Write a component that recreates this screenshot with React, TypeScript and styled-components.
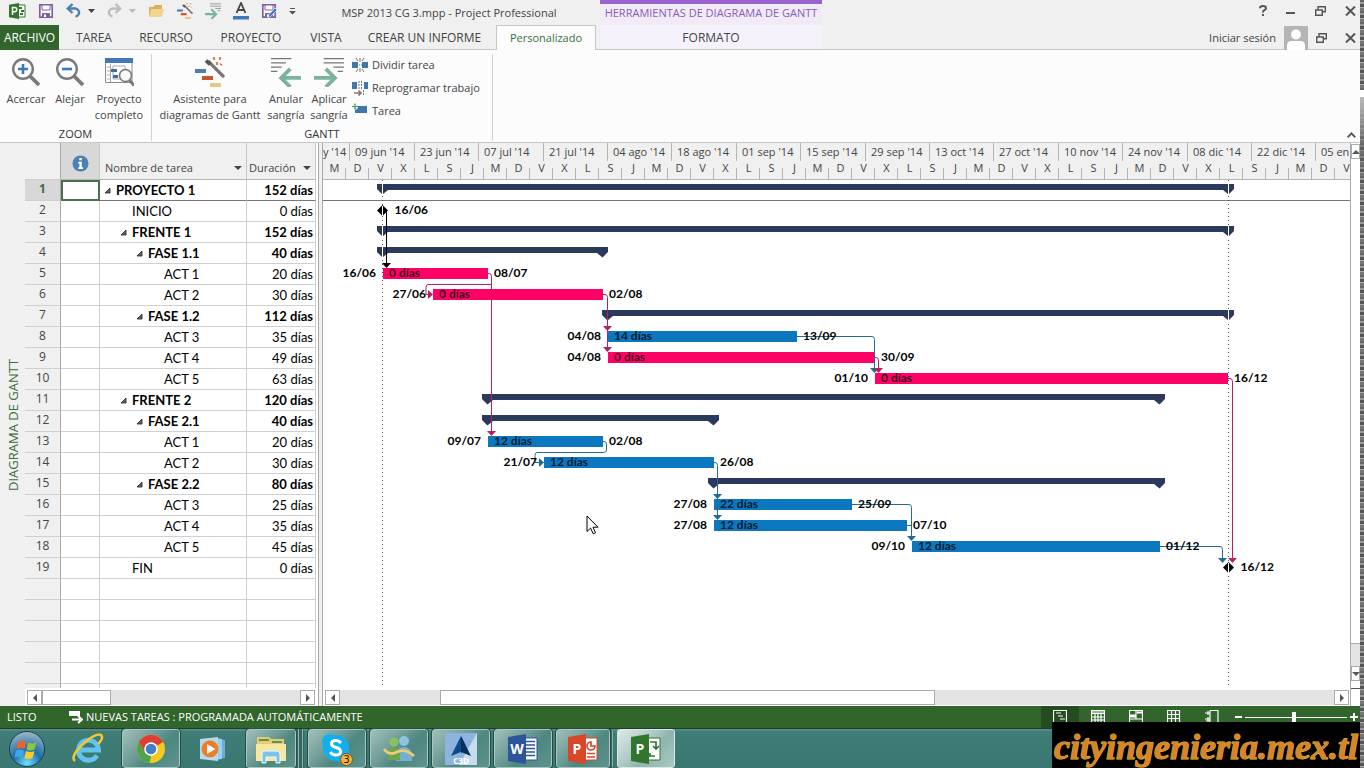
import React from "react";
import styled, { createGlobalStyle } from "styled-components";

const UI = '"Open Sans", "Noto Sans", sans-serif';
const GRID = 'Lato, "Liberation Sans", sans-serif';
const GREEN = "#31652c";
const PINK = "#ff0066";
const BLUE = "#0a77bf";
const NAVY = "#2b3a5c";
const LINK_PINK = "#b8205f";
const LINK_BLUE = "#256a92";

const GlobalStyle = createGlobalStyle`
  * { box-sizing: border-box; }
  body { margin: 0; background: #fff; font: 12px/16px ${UI}; color: #444; }
  button { font: inherit; color: inherit; background: none; border: 0; padding: 0; margin: 0; white-space: nowrap; }
  svg { display: block; flex: none; }
`;

/* ---------- shell ---------- */

const Shell = styled.div`
  display: flex;
  height: 100vh;
  overflow: hidden;
  position: relative;
`;
const Main = styled.div`
  flex: 1;
  min-width: 0;
  display: flex;
  flex-direction: column;
`;
const EdgeStrip = styled.div`
  flex: 0 0 4px;
  background:
    linear-gradient(180deg, #0000 0 90px, #fff 90px 97px, #bbb 97px, #6668 145px, #0000 180px),
    repeating-linear-gradient(180deg, #666 0 2px, #999 2px 4px, #555 4px 7px, #aaa 7px 8px, #777 8px 11px);
`;

/* ---------- title bar and tabs ---------- */

const TitleBar = styled.header`
  flex: 0 0 25px;
  display: flex;
  align-items: center;
  background: #f0f0f0;
`;
const QuickAccess = styled.div<{ $width: number }>`
  flex: 0 0 ${(p) => p.$width}px;
  display: flex;
  align-items: center;
  padding: 0 0 4px 9px;
  gap: 12px;
`;
const IconButton = styled.button`
  display: flex;
  align-items: center;
  gap: 7px;
`;
const DocTitle = styled.div`
  flex: 0 0 302px;
  text-align: center;
  white-space: nowrap;
  font-size: 11px;
`;
const ContextTitle = styled.div`
  flex: 0 0 222px;
  height: 25px;
  border-top: 4px solid #9a62cf;
  background: #f1ebf8;
  color: #8c5bb8;
  text-align: center;
  line-height: 18px;
  font-size: 11px;
  white-space: nowrap;
`;
const WindowButtons = styled.div<{ $gap: number; $lift?: boolean }>`
  margin-left: auto;
  display: flex;
  align-items: center;
  gap: ${(p) => p.$gap}px;
  padding: 0 4px ${(p) => (p.$lift ? 4 : 0)}px 0;
  font-size: 11px;
`;
const DocButtons = styled.div`
  display: flex;
  gap: 18px;
`;
const TabBar = styled.nav`
  flex: 0 0 25px;
  display: flex;
  background: #f0f0f0;
  box-shadow: inset 0 -1px #c6c6c6;
`;
const Tab = styled.button<{ $width: number; $kind?: "file" | "active" | "context" }>`
  flex: 0 0 ${(p) => p.$width}px;
  height: 25px;
  margin-left: ${(p) => (p.$kind === "context" ? 4 : 0)}px;
  ${(p) => p.$kind === "file" && `background: ${GREEN}; color: #fff;`}
  ${(p) => p.$kind === "active" && "background: #fcfcfc; color: #38713a; border: 1px solid #c6c6c6; border-bottom: 0; font-size: 11px;"}
  ${(p) => p.$kind === "context" && "background: #f6f2fb; box-shadow: inset 0 -1px #c6c6c6;"}
`;

/* ---------- ribbon ---------- */

const Ribbon = styled.section`
  flex: 0 0 93px;
  display: flex;
  background: #fcfcfc;
  border-bottom: 1px solid #c6c6c6;
  font-size: 11px;
`;
const Group = styled.div<{ $width: number }>`
  flex: 0 0 ${(p) => p.$width}px;
  margin: 4px 0 1px;
  display: flex;
  flex-direction: column;
  border-right: 1px solid #d0d0d0;
`;
const GroupBody = styled.div`
  flex: 1;
  display: flex;
  align-items: flex-start;
  padding-left: 4px;
`;
const GroupName = styled.div`
  height: 14px;
  line-height: 14px;
  text-align: center;
  color: #333;
`;
const BigButton = styled.button<{ $width: number }>`
  flex: 0 0 ${(p) => p.$width}px;
  display: flex;
  flex-direction: column;
  align-items: center;
  gap: 4px;
  padding-top: 3px;
  line-height: 16px;
  white-space: pre;
`;
const SmallList = styled.div`
  display: flex;
  flex-direction: column;
  padding-left: 2px;
`;
const SmallButton = styled.button`
  display: flex;
  align-items: center;
  gap: 4px;
  height: 23px;
  padding-bottom: 2px;
`;
const Collapse = styled.button`
  margin: auto 4px 4px auto;
`;

/* ---------- workspace ---------- */

const Workspace = styled.main`
  flex: 1;
  min-height: 0;
  display: flex;
  background: #fff;
`;
const ViewName = styled.div`
  flex: 0 0 25px;
  background: #f0f0f0;
  display: flex;
  align-items: center;
  justify-content: center;
  color: #38713a;
  font-size: 13px;
  writing-mode: vertical-rl;
  transform: rotate(180deg);
`;
const TablePane = styled.div`
  flex: 0 0 291px;
  display: flex;
  flex-direction: column;
`;
const Clip = styled.div`
  flex: 1;
  min-height: 0;
  overflow: hidden;
`;
const TaskTable = styled.table`
  width: 291px;
  table-layout: fixed;
  border-spacing: 0;
  font: 13px/20px ${GRID};
  color: #000;
`;
const HeadCell = styled.th<{ $selected?: boolean; $tight?: boolean }>`
  height: 37px;
  padding: 14px 4px 0 ${(p) => (p.$tight ? 2 : 5)}px;
  font: 11px/16px ${UI};
  color: #444;
  background: ${(p) => (p.$selected ? "#d8d8d8" : "#f0f0f0")};
  border-right: 1px solid #c8c8c8;
  border-bottom: 1px solid #b5b5b5;
  text-align: left;
  vertical-align: middle;
`;
const CornerCell = styled(HeadCell)`
  border-bottom-color: #d0d0d0;
  border-right-color: #a8a8a8;
`;
const HeadLine = styled.div`
  display: flex;
  align-items: center;
  justify-content: space-between;
  white-space: nowrap;
`;
const InfoHead = styled(HeadCell)`
  padding: 4px 0 0 11px;
`;
const RowNumber = styled.th<{ $selected?: boolean }>`
  height: 21px;
  padding: 0;
  font: ${(p) => (p.$selected ? 700 : 400)} 12px/18px ${UI};
  vertical-align: top;
  color: ${(p) => (p.$selected ? "#38713a" : "#444")};
  background: ${(p) => (p.$selected ? "#d8d8d8" : "#f0f0f0")};
  border-right: 1px solid #a8a8a8;
  border-bottom: 1px solid #d0d0d0;
`;
const Cell = styled.td<{ $bold?: boolean; $selected?: boolean; $right?: boolean }>`
  height: 21px;
  padding: 0 2px 0 4px;
  white-space: nowrap;
  font-weight: ${(p) => (p.$bold ? 700 : 400)};
  text-align: ${(p) => (p.$right ? "right" : "left")};
  border-right: 1px solid #d0d0d0;
  border-bottom: 1px solid ${(p) => (p.$selected ? "#777" : "#d0d0d0")};
`;
const ActiveCell = styled(Cell)`
  outline: 2px solid #47714a;
  outline-offset: -2px;
`;
const NameBox = styled.div<{ $level: number }>`
  display: flex;
  align-items: center;
  gap: 5px;
  height: 20px;
  padding-left: ${(p) => p.$level * 16}px;
`;
const Spacer = styled.span`
  width: 7px;
`;
const Splitter = styled.div`
  flex: 0 0 7px;
  background: #f0f0f0;
  border-left: 2px solid #fff;
  border-right: 1px solid #a8a8a8;
  box-shadow: inset 1px 0 #a8a8a8;
`;
const ScrollRow = styled.div`
  flex: 0 0 18px;
  display: flex;
  padding: 2px 1px 1px 2px;
`;
const Track = styled.div`
  flex: 1;
  background: #e4e4e4;
`;
const Thumb = styled.div<{ $width: number; $start: number }>`
  width: ${(p) => p.$width}px;
  margin-left: ${(p) => p.$start}px;
  height: 15px;
  background: #fff;
  border: 1px solid #ababab;
`;
const ScrollButton = styled.button`
  flex: 0 0 15px;
  height: 15px;
  border: 1px solid #ababab;
  background: #fff;
  display: flex;
  align-items: center;
  justify-content: center;
`;

const GanttPane = styled.div`
  flex: 1;
  min-width: 0;
  display: flex;
  flex-direction: column;
`;
const Timescale = styled.div`
  flex: 0 0 37px;
  background: #f0f0f0;
  border-bottom: 1px solid #b5b5b5;
  overflow: hidden;
`;
const Tier = styled.div`
  display: flex;
  height: 18px;
`;
const Fortnight = styled.div`
  flex: none;
  width: 64px;
  padding-left: 5px;
  border-left: 1px solid #b5b5b5;
  line-height: 18px;
  font-size: 11px;
  white-space: nowrap;
  &:nth-child(5n + 2), &:nth-child(5n + 4) { width: 65px; }
`;
const FirstFortnight = styled.div`
  flex: none;
  width: 26px;
  font-size: 11px;
  line-height: 18px;
  white-space: nowrap;
`;
const DayCell = styled.div`
  flex: none;
  width: 23px;
  height: 18px;
  line-height: 13px;
  font-size: 11px;
  text-align: center;
  background: linear-gradient(#b5b5b5, #b5b5b5) right bottom / 1px 11px no-repeat;
`;
const VerticalBar = styled.div`
  flex: 0 0 10px;
  overflow: hidden;
  display: flex;
  flex-direction: column;
  padding-top: 1px;
  border-left: 1px solid #ababab;
`;
const VThumb = styled.div`
  flex: 1;
  width: 15px;
  background: #fff;
  border-bottom: 1px solid #ababab;
`;
const VGap = styled.div`
  height: 22px;
  background: #e4e4e4;
`;
const VEnd = styled.div`
  height: 18px;
  margin-top: 7px;
  border-top: 1px solid #555;
`;

/* ---------- status bar and taskbar ---------- */

const StatusBar = styled.footer`
  flex: 0 0 23px;
  display: flex;
  align-items: center;
  padding-left: 7px;
  background: ${GREEN};
  border-bottom: 1px solid #1c3f2c;
  color: #fff;
  font-size: 11px;
  white-space: nowrap;
`;
const StatusText = styled.span<{ $width?: number }>`
  ${(p) => p.$width && `width: ${p.$width}px;`}
`;
const StatusButton = styled.button`
  display: flex;
  align-items: center;
  gap: 3px;
`;
const ViewButtons = styled.div`
  margin-left: auto;
  display: flex;
  height: 22px;
`;
const ViewButton = styled.button<{ $on?: boolean }>`
  width: 38px;
  display: flex;
  justify-content: center;
  align-items: flex-start;
  padding-top: 4px;
  background: ${(p) => (p.$on ? "#234d20" : "none")};
`;
const ZoomBox = styled.div`
  display: flex;
  align-items: center;
  gap: 3px;
  padding: 0 1px 0 4px;
`;
const ZoomRange = styled.input`
  appearance: none;
  width: 102px;
  height: 11px;
  margin: 0;
  background: linear-gradient(#fff, #fff) center / 100% 1px no-repeat;
  &::-webkit-slider-thumb { appearance: none; width: 4px; height: 11px; background: #fff; }
`;

const Taskbar = styled.nav`
  flex: 0 0 39px;
  display: flex;
  align-items: center;
  gap: 4px;
  background: linear-gradient(180deg, #5c918b 0, #3f7d76 3px, #3a7770 100%);
`;
const TaskButton = styled.button<{ $width: number; $look?: "open" | "active" }>`
  flex: 0 0 ${(p) => p.$width}px;
  height: 39px;
  display: flex;
  align-items: center;
  justify-content: center;
  border-radius: 3px;
  ${(p) =>
    p.$look === "open" &&
    "border: 1px solid #a9c6c2; outline: 1px solid #234f4b; outline-offset: 0; background: linear-gradient(135deg, #a3bfba 0, #6e9c96 40%, #4c8780 60%, #5f948d 100%);"}
  ${(p) =>
    p.$look === "active" &&
    "border: 1px solid #dbe8e6; background: linear-gradient(135deg, #dfeae8 0, #a9c6c1 45%, #8db4af 60%, #a9c8c3 100%);"}
`;
const Stack = styled.div<{ $deep?: boolean }>`
  display: flex;
  padding-right: ${(p) => (p.$deep ? 8 : 3)}px;
  background: repeating-linear-gradient(90deg, #8fb3ae 0 1px, #35665f 1px 4px);
  border-radius: 3px;
`;
const Watermark = styled.div`
  position: absolute;
  right: 4px;
  bottom: 0;
  width: 308px;
  height: 46px;
  background: #000;
  color: #d9832b;
  font: italic 700 36px/50px "Liberation Serif", serif;
  text-align: center;
  white-space: nowrap;
  -webkit-text-stroke: 1px #e8c531;
  paint-order: stroke fill;
`;
const Pointer = styled.svg`
  position: absolute;
  left: 586px;
  top: 515px;
`;

/* ---------- icons ---------- */

const Save = ({ pen }: { pen?: boolean }) => (
  <svg width="16" height="16" viewBox="0 0 16 16">
    <path d="M1.8 1.8h12.4v12.4H1.8z" fill="#fff" stroke="#8061a3" strokeWidth="1.7" />
    <path d="M4 2h8v5H4z" fill="#fff" stroke="#8061a3" />
    <path d="M4 10h8v4.5H4z" fill="#8061a3" /><path d="M6 11.5h2V14H6z" fill="#fff" />
    {pen && <path d="M7 15l1-3.5L14 5l2 2-6.300 6.500z" fill="#3f78b5" stroke="#fff" strokeWidth=".6" />}
  </svg>
);
const Undo = ({ color, flip }: { color: string; flip?: boolean }) => (
  <svg width="15" height="15" viewBox="0 0 15 15">
    <g transform={flip ? "translate(15 0) scale(-1 1)" : undefined} fill="none" stroke={color} strokeWidth="2.400">
      <path d="M2 5.500h7a4 4 0 0 1 3.500 6q-1 1.800-3 2" />
      <path d="M6.500 1L1.800 5.500l4.700 4.500" />
    </g>
  </svg>
);
const Caret = ({ color = "#444", size = 7 }: { color?: string; size?: number }) => (
  <svg width={size} height="4" viewBox="0 0 8 4" preserveAspectRatio="none"><path d="M0 0h8L4 4z" fill={color} /></svg>
);
const ProjectMark = () => (
  <svg width="17" height="16" viewBox="0 0 17 16">
    <path d="M9 2h7v12H9z" fill="#fff" stroke="#31752f" />
    <path d="M10 4h3v2h-3zM12 7h3v2h-3zM11 10h3v2h-3z" fill="#31752f" />
    <path d="M0 1.800L10 0v16L0 14.200z" fill="#31752f" />
    <path d="M3.500 12V4.500h2.200a2 2 0 0 1 0 4.200H3.500" fill="none" stroke="#fff" strokeWidth="1.500" />
  </svg>
);
const Folder = () => (
  <svg width="17" height="14" viewBox="0 0 17 14">
    <path d="M1 13V3h4l2-2h7v12z" fill="#dcae5e" /><path d="M3 5h13l-2 8H1z" fill="#f3d391" />
  </svg>
);
const Wizard = ({ size = 16 }: { size?: number }) => (
  <svg width={size} height={size} viewBox="0 0 30 30">
    <path d="M0 12h11v4H0z" fill="#4a7fb0" /><path d="M7 19h11v4H7z" fill="#c4552c" /><path d="M15 26h11v4H15z" fill="#ecc583" />
    <path d="M13 4l16 16" stroke="#777" strokeWidth="3.200" /><path d="M11 3.500l4 4" stroke="#555" strokeWidth="3.600" />
    <path d="M18 .5l2 2m0-2l-2 2m6-2l2 2m0-2l-2 2m-3 3l2 2m0-2l-2 2m4-1l2 2" stroke="#d2683a" strokeWidth="1.200" />
  </svg>
);
const Indent = ({ left, size = 28 }: { left?: boolean; size?: number }) => (
  <svg width={size} height={size} viewBox="0 0 28 28">
    <g stroke="#777" strokeWidth="1.200">
      {left ? <path d="M0 1.500h19M0 5.500h14M0 9.500h10M0 13.500h6" /> : <path d="M9 1.500h19M9 5.500h19M18 9.500h10M22 13.500h5" />}
    </g>
    <path
      d={left ? "M28 19.500H10M18 11l-8.500 8.500L18 28" : "M0 19.500h19M11 11l8.500 8.500L11 28"}
      fill="none" stroke="#7db39c" strokeWidth="3.600"
    />
  </svg>
);
const FontColor = () => (
  <svg width="16" height="18" viewBox="0 0 16 18">
    <path d="M3.500 11L8 1l4.500 10M5 8h6" fill="none" stroke="#444" strokeWidth="1.800" />
    <path d="M0 14h16v3.500H0z" fill="#3f78b5" />
  </svg>
);
const More = () => (
  <svg width="7" height="8" viewBox="0 0 7 8"><path d="M1 1h5v1H1zM0 4h7L3.500 7.500z" fill="#555" /></svg>
);
const Lens = ({ plus }: { plus?: boolean }) => (
  <svg width="30" height="30" viewBox="0 0 30 30">
    <circle cx="12" cy="12" r="9.800" fill="#fdfdfd" stroke="#7a7a7a" strokeWidth="2.400" />
    <path d="M19 19l9 9" stroke="#7a7a7a" strokeWidth="3.800" />
    <path d={plus ? "M7 12h10M12 7v10" : "M7 12h10"} stroke="#3f78b5" strokeWidth="2.600" />
  </svg>
);
const WholeProject = () => (
  <svg width="30" height="30" viewBox="0 0 30 30">
    <path d="M1.500 2v23.500h26.500V2z" fill="#fff" stroke="#888" />
    <path d="M1 1h28v5H1z" fill="#3f78b5" />
    <path d="M3 10h3M3 14h3M3 18h3M3 22h3M6.500 7v18M9 9v13h12V9z" stroke="#aaa" fill="none" />
    <path d="M7 12h6v3H7zM9 18h5v3H9z" fill="#3f6fa0" />
    <circle cx="21.500" cy="18.500" r="6" fill="#f8f8f8" stroke="#777" strokeWidth="1.600" />
    <path d="M25.500 23l4.500 5.500" stroke="#777" strokeWidth="2.800" />
  </svg>
);
const SplitTask = () => (
  <svg width="16" height="14" viewBox="0 0 16 14">
    <path d="M0 4h6v6H0zM10 4h6v6h-6z" fill="#3f78a8" /><path d="M5 7h6" stroke="#3f78a8" strokeDasharray="1 1" />
    <path d="M8 0v4M8 10v4M4 0l2 3M12 0l-2 3M4 14l2-3M12 14l-2-3" stroke="#777" />
  </svg>
);
const Reschedule = () => (
  <svg width="16" height="16" viewBox="0 0 16 16">
    <path d="M0 2h5v7H0zM12 2h4v7h-4z" fill="#3f78a8" />
    <path d="M7 1v9M9.500 1v9M11.500 10v6" stroke="#777" strokeDasharray="2 1" />
    <path d="M2 13h7M6.500 10.500L9 13l-2.500 2.500" stroke="#8a6f68" strokeWidth="1.600" fill="none" />
  </svg>
);
const NewTask = () => (
  <svg width="16" height="16" viewBox="0 0 16 16">
    <path d="M3 3h12v7H3z" fill="#3f78a8" /><path d="M0 3.500h6M3 .5v6" stroke="#fff" strokeWidth="3.500" />
    <path d="M0 3.500h6M3 .5v6" stroke="#6ba388" strokeWidth="1.600" />
  </svg>
);
const Restore = () => (
  <svg width="11" height="10" viewBox="0 0 11 10">
    <path d="M.7 4h6.600v5.300H.7zM3 3.500V.8h7.300v5H8" fill="none" stroke="#555" strokeWidth="1.400" />
  </svg>
);
const Close = () => (
  <svg width="11" height="10" viewBox="0 0 11 10"><path d="M1 .5l9 9M10 .5l-9 9" stroke="#555" strokeWidth="2" /></svg>
);
const Minimize = () => (
  <svg width="10" height="10" viewBox="0 0 10 10"><path d="M0 6h9v2H0z" fill="#555" /></svg>
);
const Help = () => (
  <svg width="8" height="11" viewBox="0 0 8 11">
    <path d="M1 3.300Q1 1 4 1t3 2.200Q7 4.500 5.300 5.200 4 5.800 4 7.500" fill="none" stroke="#555" strokeWidth="2" /><path d="M3 9h2v2H3z" fill="#555" />
  </svg>
);
const Avatar = () => (
  <svg width="24" height="24" viewBox="0 0 24 24">
    <path d="M0 0h24v24H0z" fill="#b4b4b4" /><circle cx="12" cy="8.500" r="5" fill="#fff" />
    <path d="M3 24v-5q0-4 5-4h8q5 0 5 4v5z" fill="#fff" />
  </svg>
);
const Info = () => (
  <svg width="17" height="17" viewBox="0 0 17 17">
    <circle cx="8.500" cy="8.500" r="8" fill="#4a80b6" />
    <path d="M7.300 3h2.500v2.300H7.300zM6.200 6.800h3.600v5.400H11V14H6.200v-1.800h1.200V8.500H6.200z" fill="#fff" />
  </svg>
);
const Twist = () => (
  <svg width="7" height="7" viewBox="0 0 7 7"><path d="M6 1v5H1z" fill="#666" stroke="#222" strokeWidth=".8" /></svg>
);
const Chevron = ({ dir }: { dir: "left" | "right" | "up" | "down" }) => {
  const d = { left: "M6 0v8L2 4z", right: "M2 0v8l4-4z", up: "M0 6h8L4 2z", down: "M0 2h8L4 6z" }[dir];
  return <svg width="8" height="8" viewBox="0 0 8 8"><path d={d} fill="#555" /></svg>;
};
const viewIcons = [
  "M.5 .5h13v12H.5zM3 3h5M5 6h5M7 9h5",
  "M.5 .5h13v12H.5zM1 2h12M1 3.500h12M4 4v8M7 4v8M10 4v8M1 7h12M1 10h12",
  "M.5 .5h13v12H.5zM1 6h6M1 5h6M1 7h6M8 2h5M8 3h5M1 9h12M7 1v8",
  "M.5 .5h12v12H.5zM4.500 1v12M8.500 1v12M1 4.500h12M1 8.500h12",
  "M5 .5h8v12M5 .5v12M0 3h5M0 9h5M3 1v4M3 7v4M1 11h4",
];

/* ---------- taskbar artwork ---------- */

const Start = () => (
  <svg width="38" height="38" viewBox="0 0 38 38">
    <defs>
      <radialGradient id="orb" cx=".5" cy=".9" r=".9">
        <stop offset="0" stopColor="#6fe0ff" /><stop offset=".45" stopColor="#1f6ea8" /><stop offset="1" stopColor="#9fb9c9" />
      </radialGradient>
    </defs>
    <circle cx="19" cy="19" r="17.500" fill="url(#orb)" stroke="#1b3d4a" />
    <path d="M10 12q4-2 8 0l-1.500 7q-4-2-8 0z" fill="#f0612b" />
    <path d="M20 12.500q4 2 8.500 0l-2 7q-4 2-8 0z" fill="#8cc63e" />
    <path d="M8 20.500q4-2 8 0l-1.500 7q-4-2-8 0z" fill="#3fa9e8" />
    <path d="M18 21q4 2 8.500 0l-2 7q-4 2-8 0z" fill="#ffcb2b" />
  </svg>
);
const Explorer = () => (
  <svg width="32" height="32" viewBox="0 0 32 32">
    <path d="M25 22.500a10 10 0 1 1 1.500-5.500H9" fill="none" stroke="#62c3ee" strokeWidth="5" />
    <path d="M3 28Q-2 24 10 12 24-1 29 2q3 3-3 9" fill="none" stroke="#f2c730" strokeWidth="2.600" />
  </svg>
);
const Chrome = () => (
  <svg width="30" height="30" viewBox="0 0 30 30">
    <circle cx="15" cy="15" r="14" fill="#f6c91f" />
    <path d="M15 15L2.900 8A14 14 0 0 1 27.100 8z" fill="#dd3f32" /><path d="M15 8h12.100A14 14 0 0 0 2.900 8l6 10.500z" fill="#dd3f32" />
    <path d="M2.900 8l6.100 10.500L15 22l-1.200 7A14 14 0 0 1 2.900 8z" fill="#4fa34a" />
    <circle cx="15" cy="15" r="6.800" fill="#fff" /><circle cx="15" cy="15" r="5.300" fill="#4180c8" />
  </svg>
);
const Player = () => (
  <svg width="26" height="26" viewBox="0 0 26 26">
    <path d="M18 3l7 1v18l-7 1z" fill="#6aaedb" /><path d="M14 2l8 1v20l-8 1z" fill="#9dd0ee" />
    <path d="M0 3l18-2v24L0 23z" fill="#b7d9ee" /><circle cx="10" cy="13" r="8.500" fill="#ee7d25" /><path d="M7 8l8.500 5L7 18z" fill="#fff" />
  </svg>
);
const Files = () => (
  <svg width="32" height="30" viewBox="0 0 32 30">
    <path d="M2 3h12l2 2h13v22H2z" fill="#e9cc72" /><path d="M4 6h10M17 8h10" stroke="#4f9a55" strokeWidth="2" />
    <path d="M1 10h30v17H1z" fill="#f8e7a2" />
    <path d="M7 29v-9q0-3 3-3h12q3 0 3 3v9h-4v-6H11v6z" fill="#7ec2ec" stroke="#dff" />
  </svg>
);
const SkypeIcon = () => (
  <svg width="34" height="34" viewBox="0 0 34 34">
    <circle cx="10" cy="10" r="8" fill="#12aef0" /><circle cx="22" cy="22" r="8" fill="#12aef0" /><circle cx="16" cy="16" r="13" fill="#12aef0" />
    <path d="M21 11q-2-2.500-5-2.500-4.500 0-4.500 3.300 0 2.700 4.500 3.700t4.500 4q0 3.500-4.700 3.500-3.800 0-5.300-3" fill="none" stroke="#fff" strokeWidth="3" />
    <circle cx="26.500" cy="27.500" r="6" fill="#f6b338" stroke="#7a5a18" />
    <text x="26.500" y="31" fontSize="10" fontFamily="Open Sans, sans-serif" textAnchor="middle" fill="#000">3</text>
  </svg>
);
const People = () => (
  <svg width="32" height="30" viewBox="0 0 32 30">
    <circle cx="21" cy="7" r="5" fill="#8cc4e2" /><path d="M13 27q-1-14 8-14t8 14z" fill="#74aed0" />
    <circle cx="11" cy="8" r="4.500" fill="#8cc05a" /><path d="M5 26q-1-12 6-12t6 12z" fill="#6fa54a" />
    <path d="M1 15q5 7 13 3t17 4" fill="none" stroke="#eecb74" strokeWidth="2.800" />
  </svg>
);
const Cad = () => (
  <svg width="32" height="32" viewBox="0 0 32 32">
    <path d="M0 0h32v32H0z" fill="#8db4dd" /><path d="M32 0v32H14z" fill="#c8dcf0" />
    <path d="M16 3l4.500 9L16 21z" fill="#1c6fae" /><path d="M16 3L6 23l10-4z" fill="#0d4a86" /><path d="M16 3l10 20-10-4z" fill="#08305f" />
    <text x="16" y="31" fontSize="8" fontWeight="700" fontFamily="Open Sans, sans-serif" textAnchor="middle" fill="#fff">C3D</text>
  </svg>
);
const Office = ({ color, letter, art }: { color: string; letter: string; art: string }) => (
  <svg width="30" height="30" viewBox="0 0 30 30">
    <path d="M16 4h13v22H16z" fill="#fff" stroke={color} />
    <path d={art} fill="none" stroke={color} strokeWidth="1.700" />
    <path d="M0 3l18-3v30L0 27z" fill={color} />
    <text x="9" y="20" fontSize="14" fontWeight="700" fontFamily="Open Sans, sans-serif" textAnchor="middle" fill="#fff">{letter}</text>
  </svg>
);

/* ---------- data ---------- */

type Task = { name: string; days: number; level: number; group?: boolean };
const tasks: Task[] = [
  { name: "PROYECTO 1", days: 152, level: 0, group: true },
  { name: "INICIO", days: 0, level: 1 },
  { name: "FRENTE 1", days: 152, level: 1, group: true },
  { name: "FASE 1.1", days: 40, level: 2, group: true },
  { name: "ACT 1", days: 20, level: 3 },
  { name: "ACT 2", days: 30, level: 3 },
  { name: "FASE 1.2", days: 112, level: 2, group: true },
  { name: "ACT 3", days: 35, level: 3 },
  { name: "ACT 4", days: 49, level: 3 },
  { name: "ACT 5", days: 63, level: 3 },
  { name: "FRENTE 2", days: 120, level: 1, group: true },
  { name: "FASE 2.1", days: 40, level: 2, group: true },
  { name: "ACT 1", days: 20, level: 3 },
  { name: "ACT 2", days: 30, level: 3 },
  { name: "FASE 2.2", days: 80, level: 2, group: true },
  { name: "ACT 3", days: 25, level: 3 },
  { name: "ACT 4", days: 35, level: 3 },
  { name: "ACT 5", days: 45, level: 3 },
  { name: "FIN", days: 0, level: 1 },
];
const blankRows = [20, 21, 22, 23, 24, 25];

const fortnights = [
  "09 jun '14", "23 jun '14", "07 jul '14", "21 jul '14", "04 ago '14", "18 ago '14", "01 sep '14", "15 sep '14",
  "29 sep '14", "13 oct '14", "27 oct '14", "10 nov '14", "24 nov '14", "08 dic '14", "22 dic '14", "05 en",
];
const dayLetters = Array.from({ length: 45 }, (_, i) => "MDVXLSJ"[i % 7]);

/* Horizontal positions below are chart pixels, 23 for every five days. */
const summaries = [
  { row: 1, from: 54, to: 911 },
  { row: 3, from: 54, to: 911 },
  { row: 4, from: 54, to: 285 },
  { row: 7, from: 279, to: 911 },
  { row: 11, from: 159, to: 842 },
  { row: 12, from: 159, to: 396 },
  { row: 15, from: 385, to: 842 },
];
const bars = [
  { row: 5, from: 60, to: 165, critical: true, start: "16/06", slack: "0 días", end: "08/07" },
  { row: 6, from: 110, to: 280, critical: true, start: "27/06", slack: "0 días", end: "02/08" },
  { row: 8, from: 285, to: 474, start: "04/08", slack: "14 días", end: "13/09" },
  { row: 9, from: 285, to: 552, critical: true, start: "04/08", slack: "0 días", end: "30/09" },
  { row: 10, from: 552, to: 905, critical: true, start: "01/10", slack: "0 días", end: "16/12" },
  { row: 13, from: 165, to: 280, start: "09/07", slack: "12 días", end: "02/08" },
  { row: 14, from: 221, to: 391, start: "21/07", slack: "12 días", end: "26/08" },
  { row: 16, from: 391, to: 529, start: "27/08", slack: "22 días", end: "25/09" },
  { row: 17, from: 391, to: 584, start: "27/08", slack: "12 días", end: "07/10" },
  { row: 18, from: 589, to: 837, start: "09/10", slack: "12 días", end: "01/12" },
];
const links = [
  { color: "#000", d: "M60 31.500H63.500V84", heads: [[63.5, 88]] },
  { color: LINK_PINK, d: "M165 93.500h1q2.500 0 2.500 3V252M168.500 104.500H105q-2 0-2 3V114.500H106", heads: [[168.5, 256]], side: [110, 114.5] },
  { color: LINK_PINK, d: "M280 114.500h2q2.500 0 2.500 3V170", heads: [[284.5, 151], [284.5, 172]] },
  { color: LINK_BLUE, d: "M474 156.500H549q2.500 0 2.500 3V190", heads: [[551.5, 193]] },
  { color: LINK_PINK, d: "M552 177.500h1q2.500 0 2.500 3V190", heads: [[555.5, 193]] },
  { color: LINK_PINK, d: "M905 198.500h2q2.500 0 2.500 3V380", heads: [[909.5, 383]] },
  { color: LINK_BLUE, d: "M280 261.500h1q2.500 0 2.500 3V270q0 2.500-3 2.500H214q-2 0-2 3V282.500H217", heads: [], side: [221, 282.5] },
  { color: LINK_BLUE, d: "M391 282.500h1q2.500 0 2.500 3V338", heads: [[394.5, 319], [394.5, 340]] },
  { color: LINK_BLUE, d: "M529 324.500H586q2.500 0 2.500 3V358M584 345.500h4", heads: [[588.5, 361]] },
  { color: LINK_BLUE, d: "M837 366.500H897q2.500 0 2.500 3V380", heads: [[899.5, 383]] },
];
const milestones = [
  { row: 2, x: 59.5, label: "16/06" },
  { row: 19, x: 905.5, label: "16/12" },
];
const top = (row: number) => (row - 1) * 21;
const baseline = (row: number) => top(row) + 13;

const Label = styled.text`
  font: 700 12px ${GRID};
  fill: #000;
`;

const Chart = () => (
  <svg width="100%" height="100%" role="img" aria-label="Diagrama de Gantt">
    <path d="M0 20.500H4000" stroke="#777" />
    {summaries.map((s) => (
      <path
        key={s.row}
        transform={`translate(0 ${top(s.row) + 4})`}
        d={`M${s.from} 0H${s.to}V5l-5.500 5.500L${s.to - 11} 6H${s.from + 11}l-5.500 4.500L${s.from} 5z`}
        fill={NAVY}
      />
    ))}
    {[59.5, 905.5].map((x) => (
      <g key={x}>
        <path d={`M${x} 0V2000`} stroke="#555" strokeDasharray="1 3" />
        {[1, 3, 4, 7].filter((r) => (x < 100 ? r < 7 : r !== 4)).map((r) => (
          <path key={r} d={`M${x} ${top(r) + 4}v11`} stroke="#fff" />
        ))}
      </g>
    ))}
    {bars.map((b) => (
      <rect key={b.row} x={b.from} y={top(b.row) + 4} width={b.to - b.from} height="11" fill={b.critical ? PINK : BLUE} />
    ))}
    {links.map((l) => (
      <g key={l.d}>
        <path d={l.d} fill="none" stroke={l.color} />
        {l.heads.map(([x, y]) => <path key={y} d={`M${x - 4.5} ${y - 5}h9L${x} ${y}z`} fill={l.color} />)}
        {l.side && <path d={`M${l.side[0] - 5} ${l.side[1] - 4.5}v9l5-4.500z`} fill={l.color} />}
      </g>
    ))}
    {bars.map((b) => (
      <g key={b.row}>
        <Label x={b.from - 7} y={baseline(b.row)} textAnchor="end">{b.start}</Label>
        <Label x={b.from + 6} y={baseline(b.row)} fillOpacity=".8">{b.slack}</Label>
        <Label x={b.to + 6} y={baseline(b.row)}>{b.end}</Label>
      </g>
    ))}
    {milestones.map((m) => (
      <g key={m.row}>
        <path d={`M${m.x - 5.5} ${top(m.row) + 9.5}l5.500-5.500 5.500 5.500-5.500 5.500z`} fill="#000" />
        <path d={`M${m.x} ${top(m.row) + 5}v10`} stroke="#fff" />
        <Label x={m.x + 12} y={baseline(m.row)}>{m.label}</Label>
      </g>
    ))}
  </svg>
);

/* ---------- page ---------- */

export default function App() {
  return (
    <>
      <GlobalStyle />
      <Shell>
        <Main>
          <TitleBar>
            <QuickAccess $width={298}>
              <ProjectMark />
              <IconButton aria-label="Guardar"><Save /></IconButton>
              <IconButton aria-label="Deshacer"><Undo color="#4a7fb0" /><Caret /></IconButton>
              <IconButton aria-label="Rehacer"><Undo color="#bbb" flip /><Caret color="#bbb" /></IconButton>
              <IconButton aria-label="Abrir"><Folder /></IconButton>
              <IconButton aria-label="Asistente"><Wizard /></IconButton>
              <IconButton aria-label="Sangría"><Indent size={16} /></IconButton>
              <IconButton aria-label="Color de fuente"><FontColor /></IconButton>
              <IconButton aria-label="Guardar como"><Save pen /></IconButton>
              <IconButton aria-label="Personalizar"><More /></IconButton>
            </QuickAccess>
            <DocTitle>MSP 2013 CG 3.mpp - Project Professional</DocTitle>
            <ContextTitle>HERRAMIENTAS DE DIAGRAMA DE GANTT</ContextTitle>
            <WindowButtons $gap={19} $lift>
              <IconButton aria-label="Ayuda"><Help /></IconButton>
              <IconButton aria-label="Minimizar"><Minimize /></IconButton>
              <IconButton aria-label="Restaurar"><Restore /></IconButton>
              <IconButton aria-label="Cerrar"><Close /></IconButton>
            </WindowButtons>
          </TitleBar>
          <TabBar>
            <Tab $width={59} $kind="file">ARCHIVO</Tab>
            <Tab $width={70}>TAREA</Tab>
            <Tab $width={74}>RECURSO</Tab>
            <Tab $width={96}>PROYECTO</Tab>
            <Tab $width={54}>VISTA</Tab>
            <Tab $width={143}>CREAR UN INFORME</Tab>
            <Tab $width={100} $kind="active">Personalizado</Tab>
            <Tab $width={222} $kind="context">FORMATO</Tab>
            <WindowButtons $gap={8}>
              <button>Iniciar sesión</button>
              <Avatar />
              <DocButtons>
                <IconButton aria-label="Restaurar documento"><Restore /></IconButton>
                <IconButton aria-label="Cerrar documento"><Close /></IconButton>
              </DocButtons>
            </WindowButtons>
          </TabBar>
          <Ribbon>
            <Group $width={152}>
              <GroupBody>
                <BigButton $width={44}><Lens plus />Acercar</BigButton>
                <BigButton $width={44}><Lens />Alejar</BigButton>
                <BigButton $width={54}><WholeProject />{"Proyecto\ncompleto"}</BigButton>
              </GroupBody>
              <GroupName>ZOOM</GroupName>
            </Group>
            <Group $width={341}>
              <GroupBody>
                <BigButton $width={108}><Wizard size={30} />{"Asistente para\ndiagramas de Gantt"}</BigButton>
                <BigButton $width={44}><Indent left size={30} />{"Anular\nsangría"}</BigButton>
                <BigButton $width={42}><Indent size={30} />{"Aplicar\nsangría"}</BigButton>
                <SmallList>
                  <SmallButton><SplitTask />Dividir tarea</SmallButton>
                  <SmallButton><Reschedule />Reprogramar trabajo</SmallButton>
                  <SmallButton><NewTask />Tarea</SmallButton>
                </SmallList>
              </GroupBody>
              <GroupName>GANTT</GroupName>
            </Group>
            <Collapse aria-label="Contraer la cinta">
              <svg width="9" height="6" viewBox="0 0 9 6"><path d="M.7 5.300l3.800-4 3.800 4" fill="none" stroke="#555" strokeWidth="1.800" /></svg>
            </Collapse>
          </Ribbon>
          <Workspace>
            <ViewName>DIAGRAMA DE GANTT</ViewName>
            <TablePane>
              <Clip>
                <TaskTable>
                  <colgroup><col width="36" /><col width="39" /><col width="147" /><col width="69" /></colgroup>
                  <thead>
                    <tr>
                      <CornerCell />
                      <InfoHead $selected aria-label="Indicadores"><Info /></InfoHead>
                      <HeadCell><HeadLine>Nombre de tarea<button aria-label="Filtrar nombre"><Caret size={8} /></button></HeadLine></HeadCell>
                      <HeadCell $tight><HeadLine>Duración<button aria-label="Filtrar duración"><Caret size={8} /></button></HeadLine></HeadCell>
                    </tr>
                  </thead>
                  <tbody>
                    {tasks.map((t, i) => (
                      <tr key={i}>
                        <RowNumber $selected={i === 0}>{i + 1}</RowNumber>
                        {i === 0 ? <ActiveCell /> : <Cell />}
                        <Cell $bold={t.group} $selected={i === 0}>
                          <NameBox $level={t.level}>
                            {t.group ? <button aria-label={`Contraer ${t.name}`}><Twist /></button> : <Spacer />}
                            {t.name}
                          </NameBox>
                        </Cell>
                        <Cell $bold={t.group} $selected={i === 0} $right>{t.days} días</Cell>
                      </tr>
                    ))}
                    {blankRows.map((r) => (
                      <tr key={r}><RowNumber /><Cell /><Cell /><Cell /></tr>
                    ))}
                  </tbody>
                </TaskTable>
              </Clip>
              <ScrollRow>
                <ScrollButton aria-label="Desplazar tabla a la izquierda"><Chevron dir="left" /></ScrollButton>
                <Track><Thumb $width={69} $start={0} /></Track>
                <ScrollButton aria-label="Desplazar tabla a la derecha"><Chevron dir="right" /></ScrollButton>
              </ScrollRow>
            </TablePane>
            <Splitter />
            <GanttPane>
              <Timescale>
                <Tier>
                  <FirstFortnight>y '14</FirstFortnight>
                  {fortnights.map((f) => <Fortnight key={f}>{f}</Fortnight>)}
                </Tier>
                <Tier>{dayLetters.map((d, i) => <DayCell key={i}>{d}</DayCell>)}</Tier>
              </Timescale>
              <Clip><Chart /></Clip>
              <ScrollRow>
                <ScrollButton aria-label="Desplazar diagrama a la izquierda"><Chevron dir="left" /></ScrollButton>
                <Track><Thumb $width={495} $start={100} /></Track>
                <ScrollButton aria-label="Desplazar diagrama a la derecha"><Chevron dir="right" /></ScrollButton>
              </ScrollRow>
            </GanttPane>
            <VerticalBar>
              <ScrollButton aria-label="Desplazar arriba"><Chevron dir="up" /></ScrollButton>
              <VThumb />
              <VGap />
              <ScrollButton aria-label="Desplazar abajo"><Chevron dir="down" /></ScrollButton>
              <VEnd />
            </VerticalBar>
          </Workspace>
          <StatusBar>
            <StatusText $width={62}>LISTO</StatusText>
            <StatusButton>
              <svg width="14" height="13" viewBox="0 0 14 13">
                <path d="M0 0h11v5H0z" fill="#fff" /><path d="M3 8.500h9M9 5l4 3.500L9 12" fill="none" stroke="#fff" strokeWidth="2" />
              </svg>
              NUEVAS TAREAS : PROGRAMADA AUTOMÁTICAMENTE
            </StatusButton>
            <ViewButtons>
              {viewIcons.map((d, i) => (
                <ViewButton key={d} $on={i === 0} aria-label={`Vista ${i + 1}`}>
                  <svg width="14" height="13" viewBox="0 0 14 13"><path d={d} fill="none" stroke="#fff" strokeWidth="1.200" /></svg>
                </ViewButton>
              ))}
            </ViewButtons>
            <ZoomBox>
              <button aria-label="Alejar escala"><svg width="7" height="8" viewBox="0 0 7 8"><path d="M0 3h7v2H0z" fill="#fff" /></svg></button>
              <ZoomRange type="range" aria-label="Zoom" defaultValue={48} />
              <button aria-label="Acercar escala"><svg width="9" height="8" viewBox="0 0 9 8"><path d="M0 3h3V0h2v3h3v2H5v3H3V5H0z" fill="#fff" /></svg></button>
            </ZoomBox>
          </StatusBar>
          <Taskbar>
            <TaskButton $width={54} aria-label="Inicio"><Start /></TaskButton>
            <TaskButton $width={60} aria-label="Internet Explorer"><Explorer /></TaskButton>
            <TaskButton $width={58} $look="open" aria-label="Chrome"><Chrome /></TaskButton>
            <TaskButton $width={58} aria-label="Reproductor"><Player /></TaskButton>
            <Stack $deep><TaskButton $width={50} $look="open" aria-label="Explorador"><Files /></TaskButton></Stack>
            <TaskButton $width={58} $look="open" aria-label="Skype"><SkypeIcon /></TaskButton>
            <TaskButton $width={58} $look="open" aria-label="Messenger"><People /></TaskButton>
            <TaskButton $width={58} $look="open" aria-label="Civil 3D"><Cad /></TaskButton>
            <TaskButton $width={58} $look="open" aria-label="Word">
              <Office color="#2c5697" letter="W" art="M18 7.500h9M18 11h9M18 14.500h9M18 18h9M18 21.500h9" />
            </TaskButton>
            <Stack><TaskButton $width={54} $look="open" aria-label="PowerPoint">
              <Office color="#d9472b" letter="P" art="M19 19.500h8M19 23h8M23 8a4 4 0 1 0 4 4h-4z" />
            </TaskButton></Stack>
            <TaskButton $width={58} $look="active" aria-label="Project">
              <Office color="#31752f" letter="P" art="M19 8h6v6M22 12l3 3 3-3M19 22h5M19 19v4" />
            </TaskButton>
          </Taskbar>
        </Main>
        <EdgeStrip />
        <Pointer width="13" height="20" viewBox="0 0 13 20">
          <path d="M1 1v15.500l3.600-3.400 2.600 5.700 2.300-1-2.500-5.600h5z" fill="#fff" stroke="#000" />
        </Pointer>
        <Watermark>cityingenieria.mex.tl</Watermark>
      </Shell>
    </>
  );
}
